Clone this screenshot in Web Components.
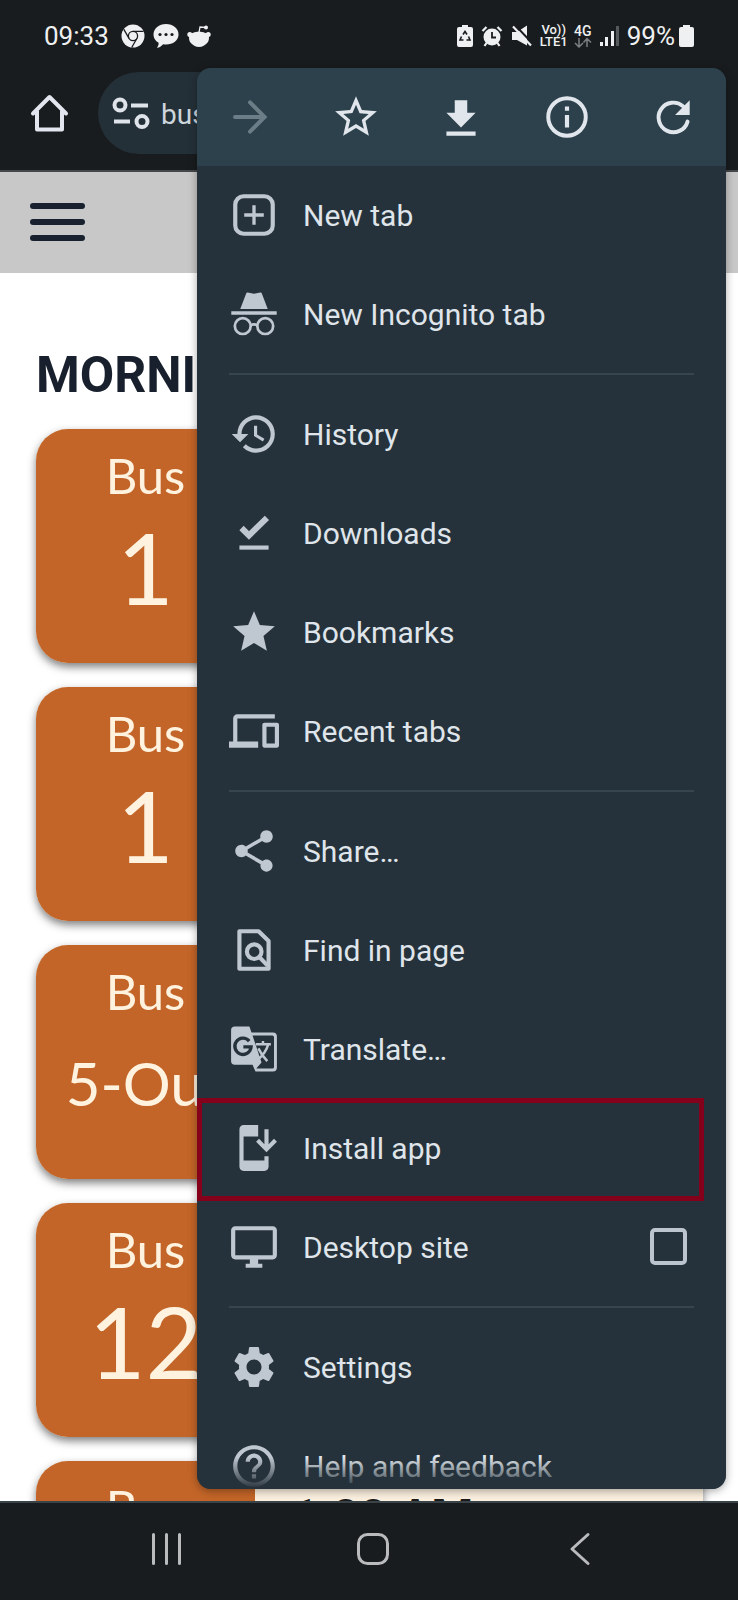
<!DOCTYPE html>
<html lang="en">
<head>
<meta charset="utf-8">
<meta name="viewport" content="width=device-width, initial-scale=1">
<title>Bus times</title>
<style>
  html, body { margin: 0; height: 100%; }
  body { font-family: Roboto, "Liberation Sans", sans-serif; background: #fff; }
</style>
</head>
<body>
<phone-screen>
  <status-bar slot="top"></status-bar>
  <browser-bar slot="top"></browser-bar>
  <site-header></site-header>
  <bus-list heading="MORNING">
    <bus-card number="1"></bus-card>
    <bus-card number="1"></bus-card>
    <bus-card number="5-Out" size="small"></bus-card>
    <bus-card number="12"></bus-card>
    <bus-card>1:00 AM</bus-card>
  </bus-list>
  <app-menu slot="menu">
    <menu-action slot="actions" icon="forward" label="Forward" dim></menu-action>
    <menu-action slot="actions" icon="star-outline" label="Bookmark"></menu-action>
    <menu-action slot="actions" icon="download" label="Download"></menu-action>
    <menu-action slot="actions" icon="info" label="Page info"></menu-action>
    <menu-action slot="actions" icon="reload" label="Reload"></menu-action>
    <menu-item icon="new-tab">New tab</menu-item>
    <menu-item icon="incognito">New Incognito tab</menu-item>
    <menu-rule></menu-rule>
    <menu-item icon="history">History</menu-item>
    <menu-item icon="done">Downloads</menu-item>
    <menu-item icon="star">Bookmarks</menu-item>
    <menu-item icon="devices">Recent tabs</menu-item>
    <menu-rule></menu-rule>
    <menu-item icon="share">Share…</menu-item>
    <menu-item icon="find">Find in page</menu-item>
    <menu-item icon="translate">Translate…</menu-item>
    <menu-item icon="install" highlighted>Install app</menu-item>
    <menu-check icon="desktop">Desktop site</menu-check>
    <menu-rule></menu-rule>
    <menu-item icon="settings">Settings</menu-item>
    <menu-item icon="help">Help and feedback</menu-item>
  </app-menu>
  <system-nav slot="bottom"></system-nav>
</phone-screen>

<script>
const ICONS = {
  'forward': '<path d="M4.8 12H19M12 5l7 7-7 7" fill="none" stroke="currentColor" stroke-width="1.9" stroke-linecap="round"/>',
  'star-outline': '<path d="M22 9.24l-7.19-.62L12 2 9.19 8.63 2 9.24l5.46 4.73L5.82 21 12 17.27 18.18 21l-1.63-7.03L22 9.24zM12 15.4l-3.76 2.27 1-4.28-3.32-2.88 4.38-.38L12 6.1l1.71 4.04 4.38.38-3.32 2.88 1 4.28L12 15.4z"/>',
  'download': '<path d="M19 10h-4V4H9v6H5l7 7 7-7zM5 19v2h14v-2H5z"/>',
  'info': '<circle cx="12" cy="12" r="9" fill="none" stroke="currentColor" stroke-width="1.9"/><path d="M11 7h2v2h-2zM11 11h2v6h-2z"/>',
  'reload': '<path d="M19 14.2A7.1 7.1 0 1 1 16.9 6.9" fill="none" stroke="currentColor" stroke-width="1.9" stroke-linecap="round"/><path d="M20 4v7h-7z"/>',
  'new-tab': '<rect x="3" y="3" width="18" height="18" rx="4" fill="none" stroke="currentColor" stroke-width="2"/><path d="M11.2 7.3h1.6v3.9h3.9v1.6h-3.9v3.9h-1.6v-3.9H7.3v-1.6h3.9z"/>',
  'incognito': '<path d="M8.2 2.3Q8.4 1.6 9 1.7L12 2.3l3-.6q.6-.1.8.6L18.6 9.6H5.4zM1.1 10.7h21.8v1.6H1.1z"/><g fill="none" stroke="currentColor" stroke-width="1.3"><circle cx="6.6" cy="17.8" r="3.8"/><circle cx="17.4" cy="17.8" r="3.8"/><path d="M10.2 17.5q1.8-1 3.6 0"/></g>',
  'history': '<path d="M13 3a9 9 0 0 0-9 9H1.300l4 4 4-4H6c0-3.87 3.13-7 7-7s7 3.13 7 7-3.13 7-7 7c-1.93 0-3.68-.79-4.940-2.060l-1.420 1.420A8.954 8.954 0 0 0 13 21a9 9 0 0 0 0-18zm-1 5v5l4.280 2.540.72-1.210-3.500-2.080V8H12z"/>',
  'done': '<path d="M6 9.600l3.600 3.600L18.200 4.700" fill="none" stroke="currentColor" stroke-width="2.900"/><path d="M5 18h14v2H5z"/>',
  'star': '<path d="M12 17.27L18.18 21l-1.64-7.03L22 9.24l-7.19-.61L12 2 9.19 8.63 2 9.24l5.46 4.73L5.82 21z"/>',
  'devices': '<path d="M4 6h18V4H4c-1.100 0-2 .9-2 2v11H0v3h14v-3H4V6zm19 2h-6c-.55 0-1 .45-1 1v10c0 .55.45 1 1 1h6c.55 0 1-.45 1-1V9c0-.55-.45-1-1-1zm-1 10h-4v-8h4v8z"/>',
  'share': '<path d="M18 16.08c-.76 0-1.44.3-1.96.77L8.91 12.7c.05-.23.09-.46.09-.7s-.04-.47-.09-.7l7.05-4.11c.54.5 1.25.81 2.04.81 1.66 0 3-1.34 3-3s-1.34-3-3-3-3 1.34-3 3c0 .24.04.47.09.7L8.04 9.81C7.5 9.31 6.79 9 6 9c-1.66 0-3 1.34-3 3s1.34 3 3 3c.79 0 1.5-.31 2.04-.81l7.12 4.16c-.05.21-.08.43-.08.65 0 1.61 1.31 2.92 2.92 2.92s2.92-1.31 2.92-2.92-1.31-2.92-2.92-2.92z"/>',
  'find': '<g fill="none" stroke="currentColor" stroke-width="2" stroke-linejoin="round"><path d="M5 3h9.200L19 7.700V21H5z"/><circle cx="12.100" cy="12.800" r="3.500"/><path d="M14.500 15.300l4 4.200"/></g>',
  'translate': '<path d="M2.800 1.200h7l1 2.900h10.300q1.900 0 1.900 1.900v14.900q0 1.900-1.900 1.900H12.700l-1.400-3.200H2.800q-1.800 0-1.800-1.800V3q0-1.800 1.800-1.800zM11.300 5.500l4.300 13-2.500 2.900h7.700q.8 0 .8-.8V6.300q0-.8-.8-.8z" fill-rule="evenodd"/><path d="M9.700 8.200A3.900 3.900 0 1 0 10.600 11H6.900" fill="none" stroke="#26323b" stroke-width="1.600"/><path d="M12.900 9.700h7.200M16.300 8.200v1.500M18.900 9.700Q17.600 14 14.100 16.900M14.100 11.700q1.500 3.200 4.300 6.100" fill="none" stroke="currentColor" stroke-width="1.200"/>',
  'install': '<path d="M17 18H7V6.500h7V1H7c-1.100 0-2 .9-2 2v18c0 1.100.9 2 2 2h10c1.100 0 2-.9 2-2v-5h-2v2z"/><path d="M18 14l5-5-1.410-1.410L19 10.170V3h-2v7.170l-2.590-2.580L13 9z"/>',
  'desktop': '<path d="M21 2H3c-1.100 0-2 .9-2 2v12c0 1.100.9 2 2 2h7v2H8v2h8v-2h-2v-2h7c1.100 0 2-.9 2-2V4c0-1.100-.9-2-2-2zm0 14H3V4h18v12z"/>',
  'settings': '<path d="M19.14 12.94c.04-.3.06-.61.06-.94 0-.32-.02-.64-.07-.94l2.03-1.58c.18-.14.23-.41.12-.61l-1.92-3.32c-.12-.22-.37-.29-.59-.22l-2.39.96c-.5-.38-1.03-.7-1.62-.94l-.36-2.54c-.04-.24-.24-.41-.48-.41h-3.84c-.24 0-.43.17-.47.41l-.36 2.54c-.59.24-1.13.57-1.62.94l-2.39-.96c-.22-.08-.47 0-.59.22L2.74 8.870c-.12.21-.08.47.12.61l2.03 1.58c-.05.3-.09.63-.09.94s.02.64.07.94l-2.03 1.58c-.18.14-.23.41-.12.61l1.92 3.32c.12.22.37.29.59.22l2.39-.96c.5.38 1.03.7 1.62.94l.36 2.54c.05.24.24.41.48.41h3.84c.24 0 .44-.17.47-.41l.36-2.54c.59-.24 1.13-.56 1.62-.94l2.39.96c.22.08.47 0 .59-.22l1.92-3.32c.12-.22.07-.47-.12-.61l-2.010-1.58zM12 15.6c-1.98 0-3.6-1.62-3.6-3.6s1.62-3.6 3.6-3.6 3.6 1.62 3.6 3.6-1.62 3.6-3.6 3.6z"/>',
  'help': '<path d="M11 18h2v-2h-2v2zm1-16C6.48 2 2 6.48 2 12s4.48 10 10 10 10-4.480 10-10S17.520 2 12 2zm0 18c-4.410 0-8-3.590-8-8s3.590-8 8-8 8 3.590 8 8-3.590 8-8 8zm0-14c-2.210 0-4 1.790-4 4h2c0-1.100.9-2 2-2s2 .9 2 2c0 2-3 1.750-3 5h2c0-2.250 3-2.500 3-5 0-2.210-1.790-4-4-4z"/>'
};
const glyph = name => `<svg viewBox="0 0 24 24" width="50" height="50" fill="currentColor" aria-hidden="true">${ICONS[name] || ''}</svg>`;

const define = (name, html) => customElements.define(name, class extends HTMLElement {
  constructor() {
    super();
    this.attachShadow({ mode: 'open' });
  }
  connectedCallback() {
    this.shadowRoot.innerHTML = typeof html === 'function' ? html(this) : html;
  }
});

define('phone-screen', `
<style>
  :host { display: flex; flex-direction: column; height: 100vh; position: relative; overflow: hidden; }
  main { flex: 1; min-height: 0; overflow: hidden; background: #fff; }
</style>
<slot name="top"></slot>
<main><slot></slot></main>
<slot name="bottom"></slot>
<slot name="menu"></slot>`);

define('status-bar', `
<style>
  :host { display: flex; flex: none; align-items: center; justify-content: space-between; height: 72px; padding: 0 44px; box-sizing: border-box; background: #191c1e; color: #eef0f1; font-size: 26px; line-height: 32px; }
  div { display: flex; align-items: center; }
  .left { gap: 12px; }
  .apps { gap: 8px; }
  .right { gap: 8px; }
  .network { gap: 6px; }
  .lte, .net { flex-direction: column; font-weight: 500; font-size: 13px; line-height: 12px; }
  .net { font-size: 14px; }
  svg { display: block; flex: none; }
  .level { gap: 4px; }
</style>
<div class="left">
  <span>09:33</span>
  <div class="apps">
  <svg width="24" height="24" viewBox="0 0 24 24"><circle cx="12" cy="12" r="11.500" fill="#eef0f1"/><g fill="none" stroke="#191c1e" stroke-width="1.300"><circle cx="12" cy="12" r="4.600"/><path d="M12 7.400H22.500M8 14.300L2.700 5.200M16 14.300L10.700 23.500"/></g></svg>
  <svg width="26" height="26" viewBox="0 0 26 26"><path d="M13 1C20 1 25.500 5.500 25.500 11.500S20 21.500 13 21.500q-1.500 0-2.800-.2Q8 24 4 25q2-2.500 1.600-5.300Q.5 17 .5 11.500C.5 5.500 6 1 13 1z" fill="#eef0f1"/><g fill="#191c1e"><circle cx="7" cy="11.500" r="1.600"/><circle cx="13" cy="11.500" r="1.600"/><circle cx="19" cy="11.500" r="1.600"/></g></svg>
  <svg width="24" height="24" viewBox="0 0 24 24"><g fill="#eef0f1"><path d="M3 10q9-5 18 0 2 4 0 8-4 5-9 5t-9-5q-2-4 0-8z"/><circle cx="2.800" cy="10.500" r="2.500"/><circle cx="21.200" cy="10.500" r="2.500"/><circle cx="19" cy="3.500" r="2"/></g><path d="M12 8.500l1-5.500 6 .5" fill="none" stroke="#eef0f1" stroke-width="1.300"/></svg>
  </div>
</div>
<div class="right">
  <svg width="16" height="22" viewBox="0 0 16 22"><path d="M5 0h6v2h3q2 0 2 2v16q0 2-2 2H2q-2 0-2-2V4q0-2 2-2h3z" fill="#eef0f1"/><path d="M6 9.500l2-3 2 3M11.500 11.500l1.500 3.500H9.500M6.500 15H3l1.500-3.500" fill="none" stroke="#191c1e" stroke-width="1.600"/></svg>
  <svg width="22" height="22" viewBox="0 0 22 22"><circle cx="11" cy="12" r="8.500" fill="#eef0f1"/><path d="M1.500 6l4-4M20.500 6l-4-4M5.500 18L3.500 21M16.500 18l2 3" stroke="#eef0f1" stroke-width="2.200"/><path d="M11 7v5.500h4" fill="none" stroke="#191c1e" stroke-width="1.800"/></svg>
  <svg width="21" height="22" viewBox="0 0 21 22"><path d="M1 7h5l10-6.500v20L6 15H1z" fill="#eef0f1"/><path d="M4 0l18 19" stroke="#191c1e" stroke-width="2"/><path d="M2 1.500l18 19" stroke="#eef0f1" stroke-width="2.200"/></svg>
  <div class="network">
    <div class="lte"><span>Vo))</span><span>LTE1</span></div>
    <div class="net"><span>4G</span><svg width="18" height="11" viewBox="0 0 18 11"><path d="M5 1v8M1 6l4 4 4-4M13 10V2M9.500 5.500L13 1.500l4 4" fill="none" stroke="#7b7f82" stroke-width="1.500"/></svg></div>
  </div>
  <svg width="19" height="20" viewBox="0 0 19 20"><path d="M0 16h3v4H0zM5 11h3v9H5zM11 5h3v15h-3z" fill="#eef0f1"/><path d="M16 0h3v20h-3z" fill="#55595b"/></svg>
  <div class="level"><span>99%</span><svg width="15" height="22" viewBox="0 0 15 22"><path d="M4 0h7v2h2q2 0 2 2v16q0 2-2 2H2q-2 0-2-2V4q0-2 2-2h2z" fill="#eef0f1"/></svg></div>
</div>`);

define('browser-bar', `
<style>
  :host { display: flex; flex: none; align-items: flex-start; height: 100px; gap: 28px; padding-left: 30px; box-sizing: border-box; background: #191c1e; border-bottom: 2px solid #45484a; }
  button { all: unset; display: flex; align-items: center; height: 82px; }
  .address { flex: 1; display: flex; align-items: center; gap: 10px; height: 82px; padding-left: 13px; margin-right: 12px; border-radius: 41px; background: #243038; color: #dfe3ea; }
  .address span { padding-top: 4px; font-size: 28px; line-height: 36px; color: #cdd6dc; }
  svg { display: block; }
</style>
<button aria-label="Home"><svg width="40" height="40" viewBox="0 0 40 40" fill="none" stroke="#e3e6ee" stroke-width="4" stroke-linejoin="round" stroke-linecap="round"><path d="M3 20.500L19.500 4 36 20.500M7 18v18.500h25V18"/></svg></button>
<div class="address">
  <svg width="40" height="34" viewBox="0 0 40 34" fill="none" stroke="#dfe3ea" stroke-width="4"><circle cx="9" cy="9" r="5.500"/><path d="M20 9.500h17M3 25.500h16"/><circle cx="31" cy="25.500" r="5.500"/></svg>
  <span>bus</span>
</div>`);

define('site-header', `
<style>
  :host { display: flex; align-items: center; height: 101px; padding: 0 30px; box-sizing: border-box; background: #c8c8c8; }
  button { all: unset; display: flex; flex-direction: column; gap: 10px; width: 55px; padding-bottom: 2px; }
  i { height: 6px; border-radius: 3px; background: #18212d; }
</style>
<button aria-label="Open navigation"><i></i><i></i><i></i></button>`);

define('bus-list', el => `
<style>
  :host { display: flex; flex-direction: column; gap: 24px; padding: 72px 35px 0 36px; }
  h1 { margin: 0; color: #18202d; font-size: 50px; line-height: 60px; font-weight: 700; }
</style>
<h1>${el.getAttribute('heading')}</h1>
<slot></slot>`);

define('bus-card', el => `
<style>
  :host { display: flex; flex: none; height: 234px; overflow: hidden; border-radius: 32px 0 0 32px; background: #fbf0df; box-shadow: 0 4px 8px rgba(0,0,0,.5); }
  .badge { display: flex; flex-direction: column; align-items: center; width: 219px; padding-top: 16px; box-sizing: border-box; background: #c36528; color: #fff3e0; font-family: Lato, "Liberation Sans", sans-serif; }
  .name { font-size: 49px; line-height: 60px; }
  .number { font-size: ${el.getAttribute('size') === 'small' ? 60 : 98}px; line-height: 124px; white-space: nowrap; }
  .time { padding: 26px 36px; color: #1b1b1b; font-size: 48px; line-height: 60px; font-weight: 700; }
</style>
<div class="badge"><span class="name">Bus</span><span class="number">${el.getAttribute('number') || ''}</span></div>
<div class="time"><slot></slot></div>`);

define('app-menu', `
<style>
  :host { display: flex; flex-direction: column; position: absolute; top: 68px; right: 12px; bottom: 111px; width: 529px; max-width: calc(100% - 24px); overflow: hidden; border-radius: 14px; background: #26323b; box-shadow: 0 2px 8px rgba(0,0,0,.35); color: #dfe5ea; }
  header { display: flex; flex: none; height: 98px; background: #2d414c; }
  nav { flex: 1; min-height: 0; overflow: hidden; }
  .fade { position: absolute; left: 0; right: 0; bottom: 0; height: 32px; background: linear-gradient(rgba(38,50,59,0), #26323b); pointer-events: none; }
</style>
<header><slot name="actions"></slot></header>
<nav><slot></slot></nav>
<div class="fade"></div>`);

define('menu-action', el => `
<style>
  :host { display: flex; flex: 1; color: #e0e6ec; }
  :host([dim]) { color: #6b7e88; }
  button { all: unset; flex: 1; display: flex; align-items: center; justify-content: center; }
</style>
<button aria-label="${el.getAttribute('label')}">${glyph(el.getAttribute('icon'))}</button>`);

const rowStyle = `
  :host { display: block; position: relative; }
  .row { all: unset; display: flex; align-items: center; gap: 24px; width: 100%; height: 99px; padding: 0 39px 2px 32px; box-sizing: border-box; font-size: 30px; line-height: 36px; }
  span { padding-top: 2px; }
  svg { flex: none; color: #bfc7d0; }
  :host([highlighted])::after { content: ""; position: absolute; inset: -1px 22px -3px 0; border: 5px solid #85001a; pointer-events: none; }`;

define('menu-item', el => `
<style>${rowStyle}</style>
<button class="row">${glyph(el.getAttribute('icon'))}<span><slot></slot></span></button>`);

define('menu-check', el => `
<style>${rowStyle}
  span { flex: 1; }
  input { appearance: none; flex: none; width: 37px; height: 37px; margin: 0; box-sizing: border-box; border: 4px solid #bcc5cd; border-radius: 5px; }
</style>
<label class="row" for="toggle">${glyph(el.getAttribute('icon'))}<span><slot></slot></span><input id="toggle" type="checkbox"></label>`);

define('menu-rule', `
<style>
  :host { display: block; padding: 9px 32px 10px; }
  hr { margin: 0; border: 0; height: 2px; background: #37454e; }
</style>
<hr>`);

define('system-nav', `
<style>
  :host { display: grid; flex: none; grid-template-columns: repeat(3, 1fr); height: 99px; padding: 0 56px 0 64px; box-sizing: border-box; background: #191c1e; border-top: 2px solid #3a4448; }
  button { all: unset; display: flex; align-items: center; justify-content: center; padding-bottom: 6px; }
  svg { fill: none; stroke: #b9bbbd; stroke-width: 3; stroke-linecap: round; stroke-linejoin: round; }
</style>
<button aria-label="Recent apps"><svg width="34" height="34" viewBox="0 0 34 34"><path d="M3.500 2.500v29M16.500 2.500v29M29.500 2.500v29"/></svg></button>
<button aria-label="Home"><svg width="34" height="34" viewBox="0 0 34 34"><rect x="2.500" y="2.500" width="29" height="29" rx="9"/></svg></button>
<button aria-label="Back"><svg width="34" height="34" viewBox="0 0 34 34"><path d="M26 2.500L10 17l16 14.500"/></svg></button>`);
</script>
</body>
</html>
